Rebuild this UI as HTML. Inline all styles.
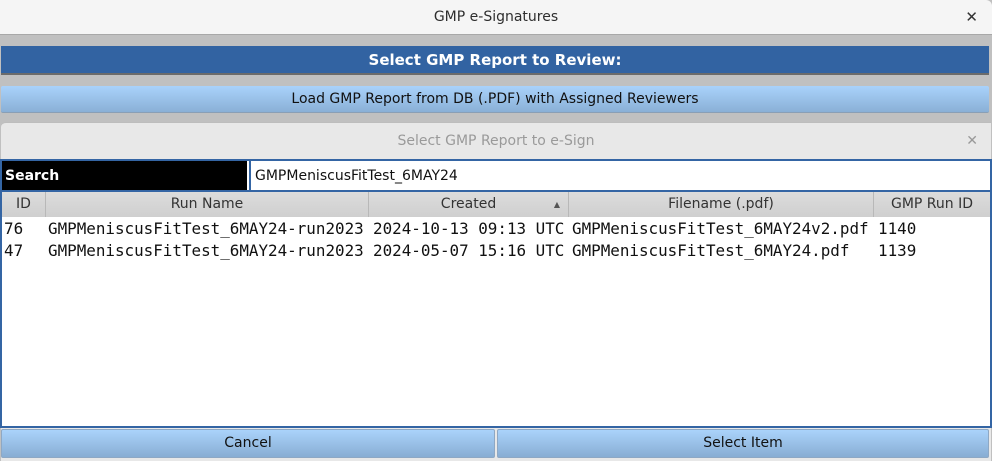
<!DOCTYPE html>
<html><head><meta charset="utf-8"><style>
*{margin:0;padding:0;box-sizing:border-box}
body{width:992px;height:461px;overflow:hidden;background:#c0c0c0;font-family:"DejaVu Sans","Liberation Sans",sans-serif;position:relative}
.a{position:absolute}
.title{left:0;top:0;width:992px;height:35px;background:#f5f5f5;border-bottom:1px solid #a8a8a8;text-align:center;font-size:14px;line-height:34px;color:#2e2e2e;border-top-right-radius:6px}
.x{right:14px;top:0;font-size:15px;line-height:34px;color:#333;font-weight:bold}
.blue{left:1px;top:46px;width:988px;height:29px;background:#3263a2;border-bottom:2px solid #6b6b6b;color:#fff;font-weight:bold;font-size:15px;text-align:center;line-height:28px}
.lb{left:1px;top:86px;width:988px;height:27px;background:linear-gradient(#a9d2fb,#8ab0d6);border-radius:2px;text-align:center;font-size:14px;line-height:27px;color:#111;border-bottom:1px solid #8a9fb5}
.dlg{left:1px;top:122px;width:990px;height:339px;background:#e8e8e8;border-top-left-radius:5px;border-top:1px solid #bdbdbd}
.dt{left:0;top:123px;width:992px;height:36px;text-align:center;font-size:14px;line-height:36px;color:#9a9a9a}
.dx{right:14px;top:123px;line-height:36px;font-size:14px;color:#999}
.frame{left:0;top:159px;width:992px;height:269px;background:#fff;border:2px solid #3465a4}
.search{left:2px;top:161px;width:245px;height:30px;background:#000;color:#fff;font-weight:bold;font-size:14px;line-height:30px;padding-left:3px}
.inp{left:249px;top:161px;width:740px;height:30px;background:#fff;font-size:14px;line-height:30px;padding-left:4px;color:#111;border-left:2px solid #3465a4}
.sep{left:2px;top:190px;width:988px;height:2px;background:#3465a4}
.hdr{top:192px;height:25px;background:linear-gradient(#dcdcdc,#cfcfcf);border-right:1px solid #b8b8b8;text-align:center;font-size:14px;line-height:25px;color:#333}
.c{font-family:"DejaVu Sans Mono","Liberation Mono",monospace;font-size:15.9px;color:#111;white-space:pre;line-height:22px}
.btn{top:429px;height:29px;background:linear-gradient(#aad3fb,#88add3);border:1px solid #8ea8c4;border-radius:2px;text-align:center;font-size:14px;line-height:27px;color:#111}
</style></head><body>
<div class="a title">GMP e-Signatures</div>
<div class="a x">✕</div>
<div class="a blue">Select GMP Report to Review:</div>
<div class="a lb">Load GMP Report from DB (.PDF) with Assigned Reviewers</div>
<div class="a dlg"></div>
<div class="a dt">Select GMP Report to e-Sign</div>
<div class="a dx">✕</div>
<div class="a frame"></div>
<div class="a search">Search</div>
<div class="a inp">GMPMeniscusFitTest_6MAY24</div>
<div class="a sep"></div>
<div class="a hdr" style="left:2px;width:44px">ID</div>
<div class="a hdr" style="left:46px;width:323px">Run Name</div>
<div class="a hdr" style="left:369px;width:200px">Created<span style="position:absolute;right:8px;font-size:8px;color:#555">▲</span></div>
<div class="a hdr" style="left:569px;width:305px">Filename (.pdf)</div>
<div class="a hdr" style="left:874px;width:116px;border-right:none">GMP Run ID</div>
<div class="a c" style="left:4px;top:218px">76
47</div>
<div class="a c" style="left:48px;top:218px">GMPMeniscusFitTest_6MAY24-run2023
GMPMeniscusFitTest_6MAY24-run2023</div>
<div class="a c" style="left:373px;top:218px">2024-10-13 09:13 UTC
2024-05-07 15:16 UTC</div>
<div class="a c" style="left:572px;top:218px">GMPMeniscusFitTest_6MAY24v2.pdf
GMPMeniscusFitTest_6MAY24.pdf</div>
<div class="a c" style="left:878px;top:218px">1140
1139</div>
<div class="a btn" style="left:1px;width:494px">Cancel</div>
<div class="a btn" style="left:497px;width:492px">Select Item</div>
</body></html>
